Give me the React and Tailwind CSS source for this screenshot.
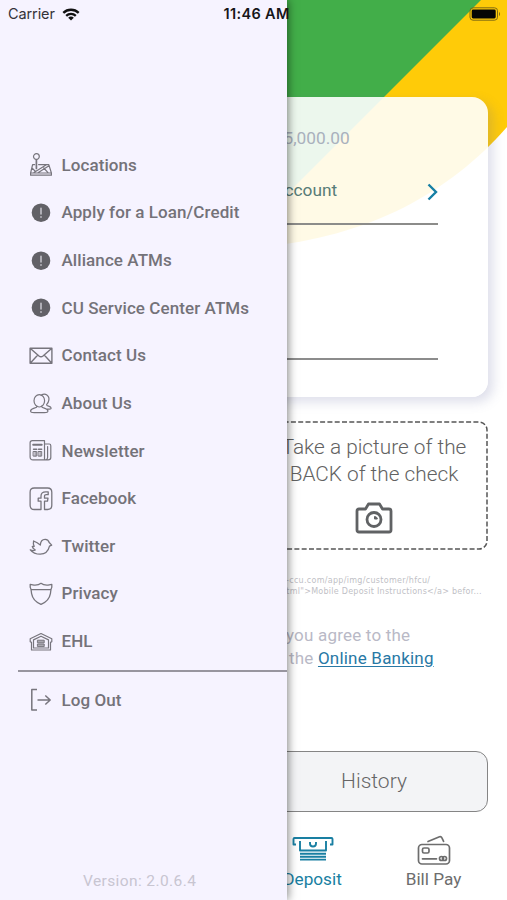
import React from 'react';

function Icon({ children, sw = 1.2, className = 'w-6 h-6' }) {
  return (
    <svg viewBox="0 0 24 24" className={className} fill="none" stroke="#77757d" strokeWidth={sw} strokeLinecap="round" strokeLinejoin="round">
      {children}
    </svg>
  );
}

const Alert = () => (
  <Icon>
    <circle cx="12" cy="11.7" r="9.3" fill="#626167" stroke="none" />
    <path d="M12 7.200v5.8M12 15.700v.5" stroke="#c9c7cf" strokeWidth="1.5" />
  </Icon>
);

const Locations = () => (
  <Icon>
    <circle cx="7.4" cy="3.6" r="2.9" />
    <path d="M7.4 6.5v9" strokeWidth="1.7" />
    <path d="M5.6 11.6H3.6L1.6 20v2.2h20.8V20l-2.6-8.4H9.6M1.6 20h20.8M5 19.6l12.4-7.8M9 19.8l11-7M3 15l3.500 3.500M14.8 15l4.400 4.800" />
  </Icon>
);
const Mail = () => (
  <Icon sw={1.4}>
    <path d="M1.1 4.2h21.8v15H1.1zM1.4 4.5L10 12q2 1.6 4 0l8.600-7.500M1.400 18.900l7.400-7.800M22.600 18.900l-7.400-7.800" />
  </Icon>
);
const People = () => (
  <Icon>
    <ellipse cx="10.300" cy="8.800" rx="5.300" ry="6.200" />
    <path d="M12.200 3.200c4-2.800 8.600.3 7.600 5.200-.3 1.900-1.300 3.300-2.200 4.300 0 1.700 4.300 1.200 4.500 3.300.1 1-.8 1.200-3.600 1.200M8 14.200c.2 2.300-6.200 1.600-6.400 4.700-.1 1.300 1 1.700 3.500 1.700h10.300c2.500 0 3.600-.4 3.500-1.700-.2-3.100-6.500-2.400-6.300-4.700" />
  </Icon>
);
const News = () => (
  <Icon>
    <path d="M3.300 1.700h12.200v19.200H4c-1.900 0-2.900-1-2.900-2.800V3.800c0-1.400.8-2.100 2.200-2.100zM15.500 5h4.700c1 0 1.600.7 1.600 1.700v11.800c0 1.700-.9 2.400-2.600 2.400H4M18.600 7.500v11c0 1.500-.8 2.200-2 2.400" />
    <path d="M4.200 5.800h8.500" strokeWidth="2" />
    <path d="M4.500 10.200h3.200M9.500 10.200h3.200" strokeWidth="1.400" />
    <path d="M4.500 12.500h3.200v4.600H4.500zM9.500 12.500h3.200v4.600H9.500zM6.100 12.500v4.600M11.100 12.500v4.600" strokeWidth="1" />
  </Icon>
);
const Facebook = () => (
  <Icon sw={1.300}>
    <path d="M12 22.500H5.300c-2.800 0-4.200-1.400-4.200-4.200V5.200C1.100 2.400 2.500 1 5.300 1h13.300c2.800 0 4.200 1.400 4.200 4.200v13.100c0 2.800-1.400 4.200-4.200 4.200h-3.100v-8.300h3l.5-3h-3.500V9.300c0-1.100.6-1.600 1.800-1.600h1.900V4.800h-2.500c-3.100 0-4.700 1.500-4.700 4.100v2.300H9.200v3H12z" />
  </Icon>
);
const Twitter = () => (
  <Icon sw={1.300}>
    <path d="M1.300 14.800c1.700.9 3.500 1 5 .2-1.600-.8-2.600-1.900-3-3.500 0-.2 1 0 1.900-.1-.9-1.600-1.100-3.300-.6-5.400 2.300 1 4.600 2.300 6.700 4 .3-3.400 2.300-5.800 5-5.700 2 .1 3.400 1.300 3.900 3.200l2.500 2.600-2.200 1.100c-1.200 5-4.500 8-9.300 8-4.200 0-7.700-1.600-9.900-4.400z" />
  </Icon>
);
const Shield = () => (
  <Icon sw={1.300}>
    <path d="M12 1.300C10.300 2.700 7.700 3.300 5 3.100L1.200 2.300v3c1.200 2.100 1 4.200 1.400 6.400.8 4.800 4.500 8.700 9.400 10.700 4.900-2 8.600-5.900 9.400-10.700.4-2.200.2-4.300 1.400-6.400v-3L19 3.100c-2.700.2-5.300-.4-7-1.800zM2.300 7.600h19.400" />
  </Icon>
);
const House = () => (
  <Icon sw={1.200}>
    <path d="M12 3.500L1.200 8.700v3l1.300.7V20h19v-7.600l1.300-.7v-3zM12 6.200l-7.500 3.700V18h15V9.900z" />
    <path d="M8.800 10.200h6.400v2.600H8.800zM8.800 14h6.400v2.600H8.800z" strokeWidth="1" fill="#aaa8b0" />
  </Icon>
);
const Exit = () => (
  <Icon sw={1.500}>
    <path d="M8 1.500H2.800v20.600H8M8.500 12h12.700M16.300 7.500l4.900 4.500-4.900 4.500" strokeLinecap="butt" />
  </Icon>
);

const items = [
  [Locations, 'Locations'],
  [Alert, 'Apply for a Loan/Credit'],
  [Alert, 'Alliance ATMs'],
  [Alert, 'CU Service Center ATMs'],
  [Mail, 'Contact Us'],
  [People, 'About Us'],
  [News, 'Newsletter'],
  [Facebook, 'Facebook'],
  [Twitter, 'Twitter'],
  [Shield, 'Privacy'],
  [House, 'EHL'],
];

function MenuRow({ icon: I, label }) {
  return (
    <li className="flex h-[47.65px] items-center gap-[9px] pl-[28.500px] text-[17px] font-medium tracking-[0.080px] text-[#747279]">
      <I />
      <span className="whitespace-nowrap">{label}</span>
    </li>
  );
}

function Drawer() {
  return (
    <aside className="absolute inset-y-0 left-0 flex w-[286.500px] flex-col bg-[#f6f3ff] shadow-[1px_0_9px_rgba(0,0,0,0.5)]">
      <ul className="mt-[141.600px]">
        {items.map(([icon, label]) => (
          <MenuRow key={label} icon={icon} label={label} />
        ))}
      </ul>
      <div className="ml-[18px] mt-[4.400px] h-[1.500px] bg-[#98959f]" />
      <ul className="mt-[5px]">
        <MenuRow icon={Exit} label="Log Out" />
      </ul>
      <p className="mb-[9px] ml-[83px] mt-auto text-[15.500px] leading-5 tracking-[0.400px] text-[#c8c5d1]">Version: 2.0.6.4</p>
    </aside>
  );
}

function StatusBar() {
  return (
    <header className="absolute inset-x-0 top-0 flex h-7 items-center font-['Inter','Liberation_Sans',sans-serif] text-[#161619]">
      <span className="ml-2 w-[54px] text-[14.500px] tracking-[-0.100px] text-[#333238]">Carrier</span>
      <svg viewBox="0 0 18 13" className="h-[13px] w-[18px]" fill="none" stroke="#111" strokeWidth="2.300">
        <path d="M1.300 4.900c4.300-4.200 11.100-4.200 15.400 0M4.200 7.900c2.700-2.600 6.900-2.600 9.600 0" />
        <path d="M6.200 9.700c1.600-1.500 4-1.500 5.600 0L9 12.500z" fill="#111" stroke="none" />
      </svg>
      <span className="ml-[143.500px] whitespace-nowrap text-[14.500px] font-semibold tracking-[0.350px]">11:46 AM</span>
      <svg viewBox="0 0 32 14" className="ml-auto mr-[6px] h-[14px] w-8" fill="none">
        <rect x="1" y=".8" width="27.500" height="12.400" rx="3" stroke="#806a14" />
        <rect x="2.700" y="2.600" width="24" height="8.900" rx="1.400" fill="#050505" />
        <path d="M30 5v4c1.400-.6 1.400-3.400 0-4z" fill="#806a14" />
      </svg>
    </header>
  );
}

export default function App() {
  return (
    <div className="relative h-[900px] w-[507px] overflow-hidden bg-white font-['Roboto','Liberation_Sans',sans-serif]">
      <svg viewBox="0 0 507 250" className="absolute left-0 top-0 h-[250px] w-[507px]">
        <path d="M0 0H507V127C450 192 370 237 260 247H0Z" fill="#ffcb08" />
        <path d="M0 0H481L287 194 200 247H0Z" fill="#42ae49" />
      </svg>

      <main className="relative flex h-full flex-col pl-[19px] pr-[19px] pt-[97px]">
        <section className="flex h-[300px] shrink-0 flex-col rounded-[16px] bg-white/90 pr-[50px] shadow-[5px_5px_12px_rgba(100,105,160,0.22)]">
          <p className="ml-[264.500px] mt-[29px] text-[17.300px] leading-6 text-[#a9b1bd]">5,000.00</p>
          <div className="mt-[28px] flex items-center">
            <span className="ml-[265.500px] text-[17.300px] leading-6 text-[#587c78]">ccount</span>
            <svg viewBox="0 0 11 18" className="ml-auto mt-[3px] h-[18px] w-[11px]" fill="none" stroke="#167fa4" strokeWidth="2.400">
              <path d="M1.500 1.500L9 9l-7.500 7.500" />
            </svg>
          </div>
          <div className="mt-[21px] h-[2px] shrink-0 bg-[#8c8c8a]" />
          <div className="mt-[133px] h-[2px] shrink-0 bg-[#8c8c8c]" />
        </section>

        <section className="ml-[241px] mt-6 flex h-[129px] shrink-0 flex-col items-center text-center text-[20.800px] font-light leading-[27px] text-[#626262]">
          <div className="relative flex h-full w-full flex-col items-center pt-[13px]">
            <svg viewBox="0 0 228 129" className="absolute inset-0 h-full w-full" fill="none">
              <rect x="1" y="1" width="226" height="127" rx="8" stroke="#555" strokeWidth="1.500" strokeDasharray="5 2.300" />
            </svg>
            <p className="whitespace-nowrap">Take a picture of the<br />BACK of the check</p>
            <svg viewBox="0 0 38 32" className="mt-[14px] h-8 w-[38px]" fill="none" stroke="#606264" strokeWidth="2.800" strokeLinejoin="round">
              <path d="M4 7h6.500l3-5h11l3 5H34q2 0 2 2v19q0 2-2 2H4q-2 0-2-2V9q0-2 2-2z" />
              <circle cx="19" cy="17.500" r="7" />
              <path d="M19.500 14.500v2.500h2.800c0-1.500-1.200-2.500-2.800-2.500z" strokeWidth="1" fill="#606264" />
            </svg>
          </div>
        </section>

        <p className="ml-[267px] mt-[26px] whitespace-nowrap font-['DejaVu_Sans','Roboto',sans-serif] text-[8px] leading-[10.500px] tracking-[0.300px] text-[#bfbfc6]">
          -ccu.com/app/img/customer/hfcu/<br /><span className="-ml-[5px] tracking-[0.260px]">html"&gt;Mobile Deposit Instructions&lt;/a&gt; befor...</span>
        </p>
        <p className="ml-[267px] mt-[27px] whitespace-nowrap text-[17px] leading-[23px] tracking-[0.200px] text-[#b9b9c6]">
          you agree to the<br />
          <span className="ml-[3px]">the </span><a className="text-[#2878a5] underline underline-offset-2">Online Banking</a>
        </p>
        <button className="ml-[241px] mt-[81px] h-[61px] shrink-0 rounded-[12px] border-[1.500px] border-[#858585] bg-[#f3f4f6] pt-px text-[21px] font-light text-[#666]">History</button>

        <nav className="ml-[235px] mt-[24px] flex text-[17.200px] leading-5">
          <div className="flex w-[120px] flex-col items-center text-[#197fa2]">
            <svg viewBox="0 0 42 25" className="h-[25px] w-[42px]" fill="none" stroke="#197fa2" strokeWidth="2.200">
              <path d="M4 8.500H1.500V3q0-1 1-1h37q1 0 1 1v5.500H38M8 5v9.500h26V5M18 6v1.500c0 4 6 4 6 0V6M8 17.800h26M8 20.700h26M8 23.600h26" strokeWidth="1.900" strokeLinejoin="round" />
            </svg>
            <span className="mt-[8px]">Deposit</span>
          </div>
          <div className="flex w-[120px] translate-x-1 flex-col items-center text-[#6d6d6d]">
            <svg viewBox="0 0 34 30" className="mt-[-1px] h-[30px] w-[34px]" fill="none" stroke="#6d6d6d" strokeWidth="1.700" strokeLinecap="round" strokeLinejoin="round">
              <rect x="1.500" y="9.500" width="31" height="19.500" rx="3.500" />
              <path d="M11 6.500l11.500-4.700q1.600-.6 2.300.9l1.800 3.600M5.500 23.800h14" />
              <rect x="5.500" y="13" width="6.500" height="5" rx="1.500" />
              <circle cx="24.500" cy="23.500" r="2" /><circle cx="27.500" cy="23.500" r="2" />
            </svg>
            <span className="mt-[4px]">Bill Pay</span>
          </div>
        </nav>
      </main>

      <Drawer />
      <StatusBar />
    </div>
  );
}
